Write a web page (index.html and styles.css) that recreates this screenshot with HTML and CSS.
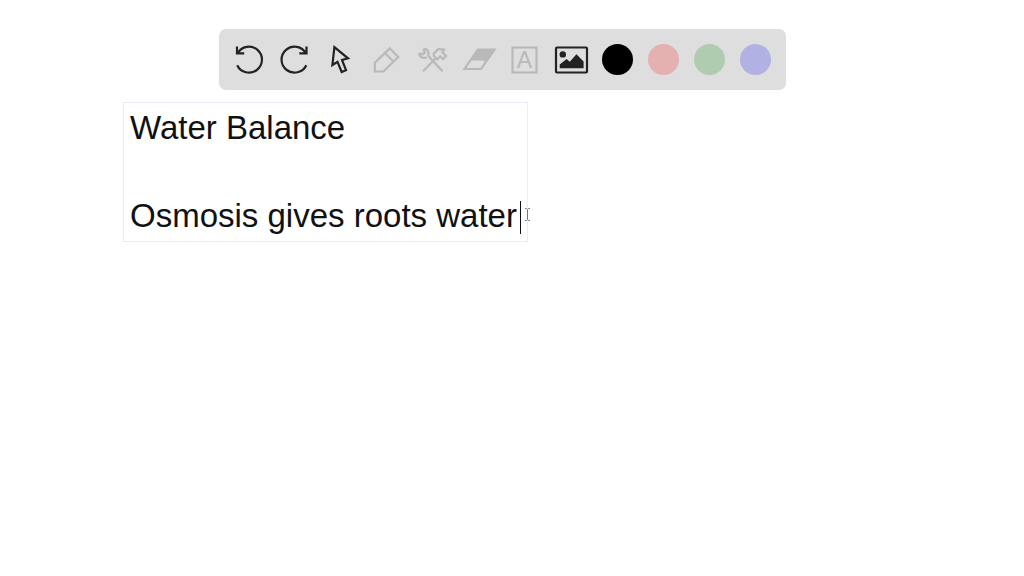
FILE: index.html
```html
<!DOCTYPE html>
<html lang="en">
<head>
  <meta charset="UTF-8">
  <meta name="viewport" content="width=device-width, initial-scale=1.0">
  <title>Whiteboard</title>
  <link rel="stylesheet" href="styles.css">
</head>
<body>
  <header class="header">
    <div class="toolbar" role="toolbar" aria-label="Drawing tools">
      <button class="tool" type="button" aria-label="Undo">
        <svg viewBox="0 0 31 31"><path d="M3 2.5V9.3H10.2M3.6 9.3A13 13 0 1 1 3.2 21.2"/></svg>
      </button>
      <button class="tool" type="button" aria-label="Redo">
        <svg viewBox="0 0 31 31"><path d="M26.5 2.5V9.3H19.3M25.9 9.3A13 13 0 1 0 26.3 21.2"/></svg>
      </button>
      <button class="tool" type="button" aria-label="Select">
        <svg viewBox="0 0 31 31"><path d="M8.4 3.2L22 14.3L16 16L20 26.2L15.7 28L11.5 17.8L6.4 21Z"/></svg>
      </button>
      <button class="tool muted" type="button" aria-label="Pencil">
        <svg viewBox="0 0 31 31"><path d="M17.8 4.4L26.3 13L11.5 27.5H2.8V18.7ZM13 9.2L21.8 17.7"/></svg>
      </button>
      <button class="tool muted" type="button" aria-label="Tools">
        <svg viewBox="0 0 31 31">
          <path d="M5.4 4.6C9.6 4.6 11.6 8 10.2 11.8L24.5 27.3M1.2 9C1.2 13 4.8 15 8.8 13.4M5.4 4.8L6.8 8.4L5 10.2L1.4 9.2"/>
          <path d="M5 27.3L18.3 13.8M15.8 9.6L20.4 5L26 5.6L24.4 8.2L28 12L25.2 15L22.2 12.4L19.2 15.4L15.8 12Z"/>
        </svg>
      </button>
      <button class="tool muted" type="button" aria-label="Eraser">
        <svg viewBox="0 0 31 31">
          <path d="M13.8 5.5H30.6L17 25H0.5Z"/>
          <path class="solid" d="M13.8 5.5H30.6L22 17.5L18.5 16.5H6Z"/>
        </svg>
      </button>
      <button class="tool muted" type="button" aria-label="Text">
        <svg viewBox="0 0 31 31">
          <rect x="2.5" y="3.5" width="24" height="25"/>
          <text class="letter" x="14.5" y="24" text-anchor="middle">A</text>
        </svg>
      </button>
      <button class="tool" type="button" aria-label="Image">
        <svg viewBox="0 0 31 31">
          <rect x="0" y="3.5" width="31" height="25" rx="1"/>
          <circle class="solid" cx="6.8" cy="10.4" r="3.2"/>
          <path class="solid" d="M3.7 24.3V20.5L10.6 15L13.8 17.8L20.4 10.2L27.6 17.5V24.3Z"/>
        </svg>
      </button>
      <button class="swatch black" type="button" aria-label="Black"></button>
      <button class="swatch red" type="button" aria-label="Red"></button>
      <button class="swatch green" type="button" aria-label="Green"></button>
      <button class="swatch blue" type="button" aria-label="Blue"></button>
    </div>
  </header>

  <main class="board">
    <div class="note">
      <textarea class="note-text" rows="3" aria-label="Text note" spellcheck="false">Water Balance

Osmosis gives roots water</textarea>
      <span class="caret"></span>
      <svg class="pointer" viewBox="0 0 7 13"><path d="M1 .5H2.5L3.5 1.5L4.5 .5H6M3.5 1.5V11.5M1 12.5H2.5L3.5 11.5L4.5 12.5H6"/></svg>
    </div>
  </main>
</body>
</html>
```
FILE: styles.css
```css
* {
  box-sizing: border-box;
}

body {
  margin: 0;
  min-height: 100vh;
  display: flex;
  flex-direction: column;
  background: #fff;
  font-family: "Liberation Sans", Arial, sans-serif;
}

.header {
  display: flex;
  justify-content: center;
  padding: 29px 20px 12px 0;
}

.toolbar {
  display: flex;
  align-items: center;
  gap: 15px;
  padding: 15px;
  background: #dedede;
  border-radius: 7px;
}

.tool,
.swatch {
  width: 31px;
  height: 31px;
  padding: 0;
  border: none;
  background: none;
  cursor: pointer;
}

.tool {
  color: #202224;
}

.tool.muted {
  color: #b9b9b9;
}

.tool svg {
  display: block;
  width: 31px;
  height: 31px;
  overflow: visible;
  fill: none;
  stroke: currentColor;
  stroke-width: 2.2;
}

.tool .solid {
  fill: currentColor;
  stroke: none;
}

.tool .letter {
  fill: currentColor;
  stroke: none;
  font-family: "Liberation Sans", Arial, sans-serif;
  font-size: 23px;
}

.swatch {
  border-radius: 50%;
}

.swatch.black {
  background: #000;
}

.swatch.red {
  background: #e5b0b0;
}

.swatch.green {
  background: #b0ccb0;
}

.swatch.blue {
  background: #b1b1e3;
}

.board {
  position: relative;
  flex: 1;
}

/* notes can be placed anywhere on the board */
.note {
  position: absolute;
  top: 0;
  left: 123px;
}

.note-text {
  display: block;
  width: 405px;
  padding: 3px 6px;
  border: 1px solid #ececf6;
  outline: none;
  resize: none;
  overflow: hidden;
  background: transparent;
  color: #111;
  font-family: inherit;
  font-size: 33px;
  line-height: 44px;
}

.caret {
  position: absolute;
  right: 7px;
  bottom: 8px;
  width: 1px;
  height: 33px;
  background: #111;
}

.pointer {
  position: absolute;
  right: -3px;
  bottom: 21px;
  width: 7px;
  height: 13px;
  fill: none;
  stroke: #777;
  stroke-width: 1;
}
```
